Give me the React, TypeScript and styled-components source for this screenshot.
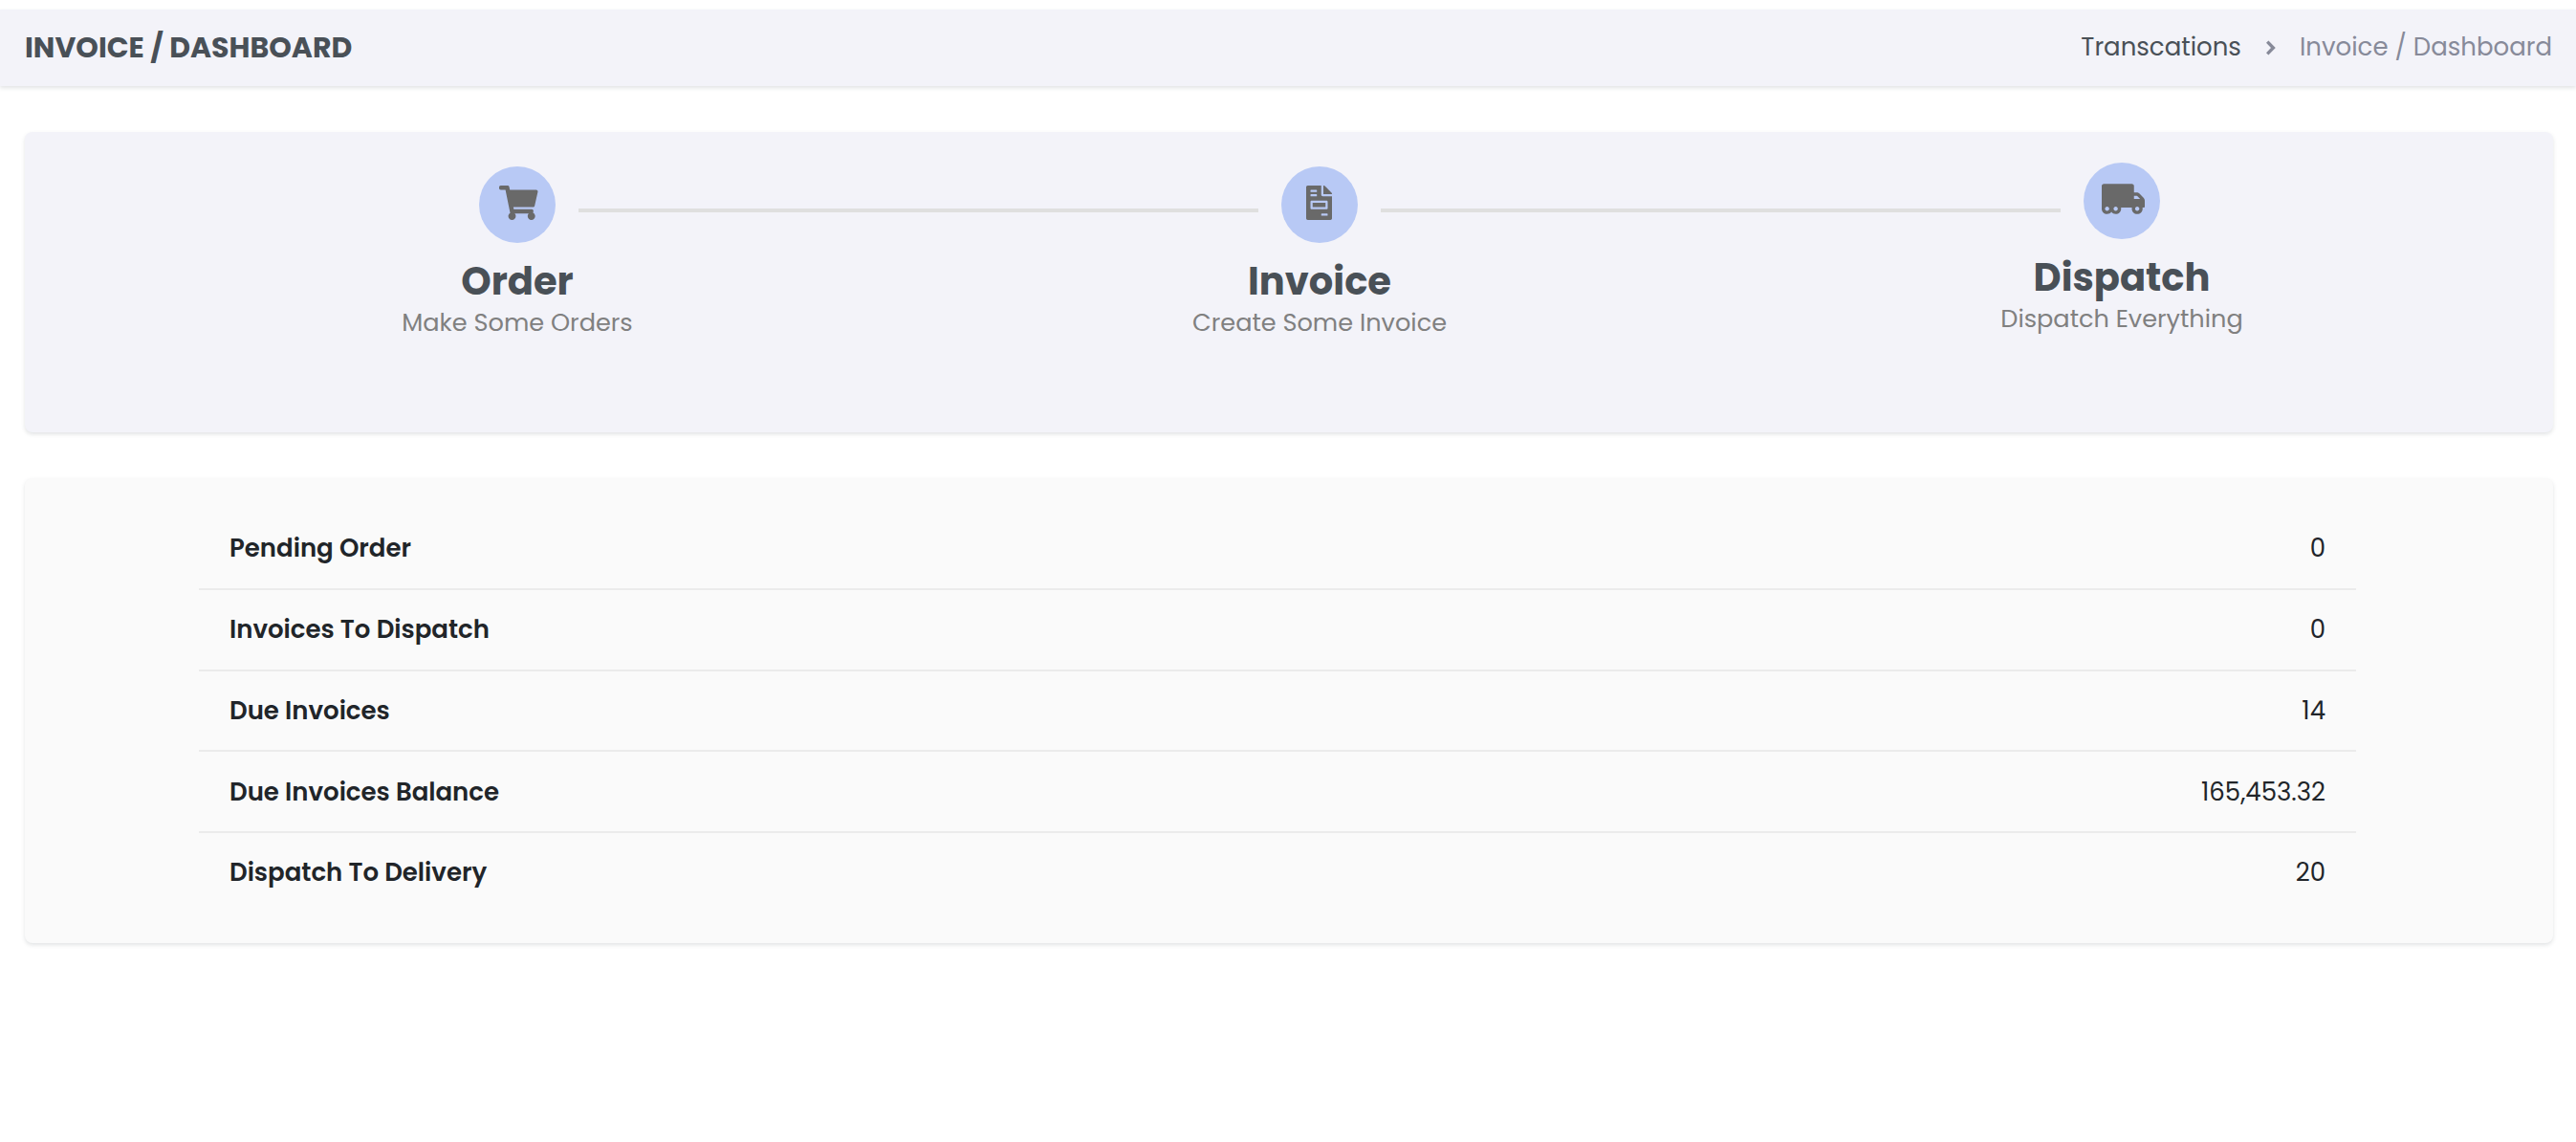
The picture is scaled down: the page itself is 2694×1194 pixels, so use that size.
import React from "react";
import styled, { createGlobalStyle } from "styled-components";
import { FaShoppingCart, FaFileInvoice, FaTruckMoving } from "react-icons/fa";
import type { IconType } from "react-icons";

const GlobalStyle = createGlobalStyle`
  *, *::before, *::after { box-sizing: border-box; }
  body {
    margin: 0;
    background: #fff;
    color: #212529;
    font-family: Poppins, Inter, "Open Sans", sans-serif;
    font-size: 26px;
    line-height: 39px;
  }
`;

const Page = styled.div`
  min-height: 1194px;
  padding-top: 10px;
`;

const TitleBar = styled.header`
  display: flex;
  align-items: center;
  justify-content: space-between;
  height: 80px;
  padding: 0 25px 0 26px;
  background: #f3f3f9;
  box-shadow: 0 2px 4px rgba(56, 65, 74, 0.15);
`;

const Title = styled.h1`
  margin: 0;
  font-size: 30px;
  font-weight: 700;
  line-height: 36px;
  text-transform: uppercase;
  color: #495057;
`;

const Breadcrumb = styled.nav`
  display: flex;
  align-items: center;
  padding-bottom: 2px;
`;

const Crumb = styled.span<{ $active?: boolean }>`
  color: ${(p) => (p.$active ? "#878a99" : "#495057")};
`;

const Chevron = styled.svg`
  width: 11px;
  height: 16px;
  margin: 1px 24px 0 26px;
  fill: none;
  stroke: #878a99;
  stroke-width: 3.4;
`;

const Main = styled.main`
  display: flex;
  flex-direction: column;
  gap: 48px;
  padding: 48px 24px 0 26px;
`;

const Card = styled.section<{ $tone: string }>`
  background: ${(p) => p.$tone};
  border-radius: 8px;
  box-shadow: 0 2px 4px rgba(56, 65, 74, 0.15);
`;

const Steps = styled(Card)`
  display: flex;
  align-items: flex-start;
  height: 314px;
  padding: 36px 387px 0 451px;
`;

const StepBox = styled.div<{ $raise?: boolean }>`
  display: flex;
  flex-direction: column;
  align-items: center;
  flex: none;
  width: 128px;
  margin-top: ${(p) => (p.$raise ? -4 : 0)}px;
  white-space: nowrap;
`;

const Bubble = styled.div<{ $iconWidth: number }>`
  display: flex;
  width: 80px;
  height: 80px;
  padding: 20px 0 0 ${(p) => (p.$iconWidth > 30 ? 21 : 26)}px;
  border-radius: 50%;
  background: #b8c9f5;
  color: #696969;

  svg {
    flex: none;
    width: ${(p) => p.$iconWidth}px;
    height: 36px;
    margin-left: ${(p) => (p.$iconWidth > 42 ? -2 : 0)}px;
  }
`;

const StepTitle = styled.h2`
  margin: 16px 0 4px;
  font-size: 40px;
  font-weight: 700;
  line-height: 48px;
  color: #495057;
`;

const StepNote = styled.p`
  margin: 0;
  font-size: 25.6px;
  line-height: 30px;
  color: #808080;
`;

const Connector = styled.div`
  flex: 1;
  height: 4px;
  margin-top: 44px;
  background: #dfdfdf;
`;

const Summary = styled(Card)`
  height: 486px;
  padding: 32.36px 206px 0 182px;
`;

const Row = styled.div`
  display: flex;
  align-items: center;
  justify-content: space-between;
  height: 84.69px;
  padding: 0.56px 32px 0;
  border-bottom: 2px solid #ebebeb;

  &:last-child {
    border-bottom-color: transparent;
  }
`;

const Label = styled.span`
  font-weight: 600;
`;

const Value = styled.span`
  text-align: right;
`;

type StepProps = {
  icon: IconType;
  iconWidth: number;
  title: string;
  note: string;
  raise?: boolean;
};

function Step({ icon: Icon, iconWidth, title, note, raise }: StepProps) {
  return (
    <StepBox $raise={raise}>
      <Bubble $iconWidth={iconWidth}>
        <Icon />
      </Bubble>
      <StepTitle>{title}</StepTitle>
      <StepNote>{note}</StepNote>
    </StepBox>
  );
}

const totals = [
  { label: "Pending Order", value: "0" },
  { label: "Invoices To Dispatch", value: "0" },
  { label: "Due Invoices", value: "14" },
  { label: "Due Invoices Balance", value: "165,453.32" },
  { label: "Dispatch To Delivery", value: "20" },
];

export default function App() {
  return (
    <Page>
      <GlobalStyle />
      <TitleBar>
        <Title>Invoice / Dashboard</Title>
        <Breadcrumb>
          <Crumb>Transcations</Crumb>
          <Chevron viewBox="0 0 11 16">
            <path d="M1.2 1.6 7.4 8 1.2 14.4" />
          </Chevron>
          <Crumb $active>Invoice / Dashboard</Crumb>
        </Breadcrumb>
      </TitleBar>
      <Main>
        <Steps $tone="#f3f3f9">
          <Step icon={FaShoppingCart} iconWidth={40.5} title="Order" note="Make Some Orders" />
          <Connector />
          <Step icon={FaFileInvoice} iconWidth={27} title="Invoice" note="Create Some Invoice" />
          <Connector />
          <Step icon={FaTruckMoving} iconWidth={45} title="Dispatch" note="Dispatch Everything" raise />
        </Steps>
        <Summary $tone="#fafafa">
          {totals.map((t) => (
            <Row key={t.label}>
              <Label>{t.label}</Label>
              <Value>{t.value}</Value>
            </Row>
          ))}
        </Summary>
      </Main>
    </Page>
  );
}
